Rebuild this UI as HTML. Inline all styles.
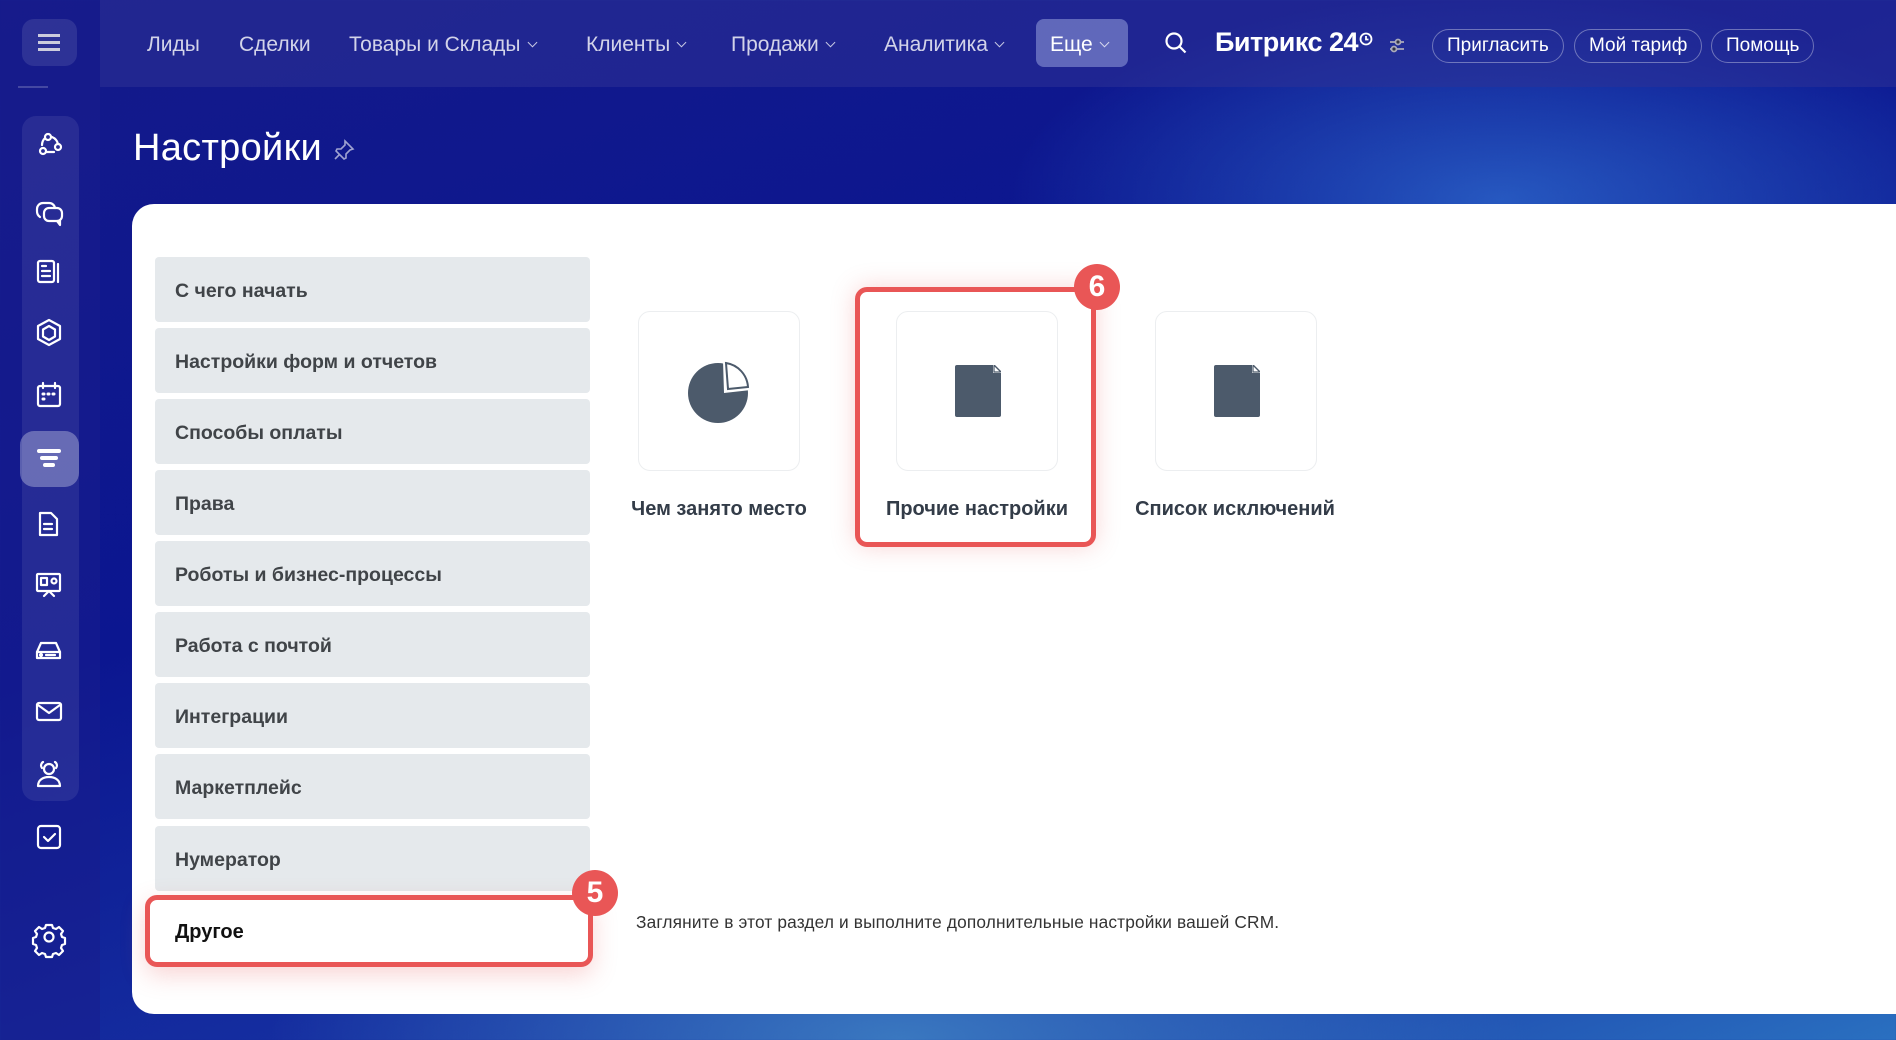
<!DOCTYPE html>
<html><head><meta charset="utf-8">
<style>
*{box-sizing:border-box;margin:0;padding:0}
body{width:1896px;height:1040px;overflow:hidden;position:relative;font-family:"Liberation Sans",sans-serif;
background:radial-gradient(ellipse 700px 300px at 1500px 200px,rgba(60,140,230,.55),transparent 70%),radial-gradient(ellipse 900px 300px at 900px 1040px,#3a78c0,transparent 70%),linear-gradient(160deg,#141a8a 0%,#0b1690 40%,#1a3aa8 80%,#2a70c0 100%);}
.side{position:absolute;left:0;top:0;width:100px;height:1040px;background:rgba(25,30,140,.55)}
.top{position:absolute;left:100px;top:0;right:0;height:87px;background:rgba(45,50,150,.55)}
.nav{position:absolute;top:45px;transform:translateY(-50%);color:rgba(255,255,255,.8);font-size:21px;white-space:nowrap}
.chev{display:inline-block;width:7px;height:7px;border-right:1.5px solid rgba(255,255,255,.75);border-bottom:1.5px solid rgba(255,255,255,.75);transform:rotate(45deg);margin-left:8px;position:relative;top:-5px}
.btn{position:absolute;top:29px;height:34px;border:1.5px solid rgba(255,255,255,.35);border-radius:17px;color:#fff;font-size:19px;line-height:31px;padding:0 14px}
.panel{position:absolute;left:132px;top:204px;width:1800px;height:810px;background:#fff;border-radius:22px}
.mi{position:absolute;left:155px;width:435px;height:65px;background:#e5e9ec;border-radius:4px;font-weight:bold;font-size:19.5px;color:#404448;line-height:69px;padding-left:20px}
.tile{position:absolute;top:311px;width:162px;height:160px;border:1.5px solid #eceef0;border-radius:12px;background:#fff}
.lbl{position:absolute;top:496px;font-weight:bold;font-size:20px;color:#333c48;text-align:center;width:240px}
.badge{position:absolute;width:46px;height:46px;border-radius:50%;background:#e95656;color:#fff;font-weight:bold;font-size:30px;text-align:center;line-height:46px}
</style></head><body>
<div class="side"></div>
<div style="position:absolute;left:22px;top:19px;width:55px;height:47px;border-radius:12px;background:rgba(255,255,255,.1)"></div>
<div style="position:absolute;left:38px;top:34px;width:22px;height:2.5px;background:#ccd;box-shadow:0 7px 0 #ccd,0 14px 0 #ccd"></div>
<div style="position:absolute;left:18px;top:86px;width:30px;height:2px;background:rgba(255,255,255,.2)"></div>
<div style="position:absolute;left:22px;top:116px;width:57px;height:685px;border-radius:14px;background:rgba(255,255,255,.08)"></div>
<div style="position:absolute;left:20px;top:431px;width:59px;height:56px;border-radius:14px;background:rgba(255,255,255,.3)"></div>
<svg style="position:absolute;left:0;top:0" width="100" height="1040" fill="none" stroke="#fff" stroke-width="2.2" stroke-linecap="round" stroke-linejoin="round">
<circle cx="48" cy="137" r="3"/><circle cx="43" cy="151" r="3"/><circle cx="58" cy="147" r="3"/><path d="M42 145a10 10 0 0 1 3-7M46 152h8M52 137a10 10 0 0 1 6 7"/>
<path d="M40 217a7 7 0 0 1-3-6v-2a6 6 0 0 1 6-6h6a6 6 0 0 1 6 5"/><rect x="44" y="208" width="18" height="13" rx="5"/><path d="M57 221l3 4v-4"/>
<rect x="38" y="261" width="16" height="21" rx="2"/><path d="M58 264v18M42 266h4M42 271h8M42 276h8"/>
<path d="M49 320l11 6v13l-11 6-11-6v-13z"/><path d="M49 326l6 3.5v7l-6 3.5-6-3.5v-7z"/>
<rect x="38" y="386" width="22" height="20" rx="2"/><path d="M43 383v5M55 383v5"/><path d="M43 394h1M48 394h1M53 394h1M43 399h1" stroke-width="3"/>
<path d="M39 451h20M42 458h14M45 465h8" stroke-width="4"/>
<path d="M40 513h11l6 6v16h-17z"/><path d="M44 524h8M44 529h8"/>
<rect x="37" y="574" width="23" height="17" rx="1"/><rect x="41" y="578" width="6" height="7"/><circle cx="54" cy="581" r="2.5"/><path d="M44 596l5-5 5 5"/>
<path d="M37 652l4-9h15l4 9v6h-23z"/><path d="M37 652h23M46 655h9"/><circle cx="41" cy="655" r="1"/>
<rect x="37" y="703" width="24" height="17" rx="2"/><path d="M38 705l11 8 11-8"/>
<circle cx="49" cy="769" r="5"/><path d="M38 786c0-6 5-9 11-9s11 3 11 9zM42 768a4 4 0 0 1 1-6M56 768a4 4 0 0 0-1-6"/>
<rect x="38" y="826" width="22" height="22" rx="3"/><path d="M44 837l4 4 7-7"/>
<circle cx="49" cy="937" r="4.5"/><path d="M46 925h6l1 3 3 1 3-2 4 4-2 3 1 3 3 1v6l-3 1-1 3 2 3-4 4-3-2-3 1-1 3h-6l-1-3-3-1-3 2-4-4 2-3-1-3-3-1v-6l3-1 1-3-2-3 4-4 3 2 3-1z"/>
</svg>
<div class="top"></div>
<div class="nav" style="left:147px">Лиды</div>
<div class="nav" style="left:239px">Сделки</div>
<div class="nav" style="left:349px">Товары и Склады<span class="chev"></span></div>
<div class="nav" style="left:586px">Клиенты<span class="chev"></span></div>
<div class="nav" style="left:731px">Продажи<span class="chev"></span></div>
<div class="nav" style="left:884px">Аналитика<span class="chev"></span></div>
<div style="position:absolute;left:1036px;top:19px;width:92px;height:48px;border-radius:8px;background:rgba(150,160,220,.55)"></div>
<div class="nav" style="left:1050px;color:#fff">Еще<span class="chev"></span></div>
<svg style="position:absolute;left:1164px;top:31px" width="26" height="26" fill="none" stroke="#fff" stroke-width="2.2"><circle cx="10" cy="10" r="7.5"/><path d="M15.5 15.5l6 6"/></svg>
<div style="position:absolute;left:1215px;top:27px;color:#fff;font-weight:bold;font-size:27px;letter-spacing:-.5px">Битрикс 24</div>
<svg style="position:absolute;left:1356px;top:32px" width="50" height="26" fill="none" stroke="#fff" stroke-width="1.8"><circle cx="10" cy="7" r="5.5"/><path d="M10 4v3.5h2.5"/><path d="M34 10h14M34 17h14" stroke="#aab"/><circle cx="42" cy="10" r="2.5" fill="#334" stroke="#aab"/><circle cx="38" cy="17" r="2.5" fill="#334" stroke="#aab"/></svg>
<div class="btn" style="left:1432px">Пригласить</div>
<div class="btn" style="left:1574px">Мой тариф</div>
<div class="btn" style="left:1711px">Помощь</div>
<div style="position:absolute;left:133px;top:127px;color:#fff;font-size:38px;font-weight:500;letter-spacing:.3px">Настройки</div>
<svg style="position:absolute;left:332px;top:138px" width="24" height="24" fill="none" stroke="rgba(255,255,255,.6)" stroke-width="1.6"><path d="M13 3l8 8-3 1-4 4 0 4-2 1-8-8 1-2 4 0 4-4z"/><path d="M7 17l-4 4"/></svg>
<div class="panel"></div>
<div class="mi" style="top:257px">С чего начать</div>
<div class="mi" style="top:328px">Настройки форм и отчетов</div>
<div class="mi" style="top:399px">Способы оплаты</div>
<div class="mi" style="top:470px">Права</div>
<div class="mi" style="top:541px">Роботы и бизнес-процессы</div>
<div class="mi" style="top:612px">Работа с почтой</div>
<div class="mi" style="top:683px">Интеграции</div>
<div class="mi" style="top:754px">Маркетплейс</div>
<div class="mi" style="top:826px">Нумератор</div>
<div style="position:absolute;left:145px;top:895px;width:448px;height:72px;border:5px solid #e95656;border-radius:12px;background:#fff;box-shadow:0 8px 24px rgba(233,86,86,.25);font-weight:bold;font-size:20px;color:#111;line-height:64px;padding-left:25px">Другое</div>
<div class="badge" style="left:572px;top:870px">5</div>
<div style="position:absolute;left:636px;top:912px;font-size:17.3px;color:#333;letter-spacing:.15px">Загляните в этот раздел и выполните дополнительные настройки вашей CRM.</div>
<div style="position:absolute;left:855px;top:287px;width:241px;height:260px;border:5px solid #e95656;border-radius:12px;box-shadow:0 0 24px rgba(233,86,86,.25)"></div>
<div class="tile" style="left:638px"><svg style="position:absolute;left:49px;top:47px" width="64" height="64"><circle cx="30" cy="34" r="30" fill="#4c5a6b"/><path d="M35 2a29 29 0 0 1 28 29l-27 3z" fill="#fff"/><path d="M38 4a26 26 0 0 1 22 24l-20 2z" fill="none" stroke="#4c5a6b" stroke-width="2"/></svg></div>
<div class="tile" style="left:896px"><svg style="position:absolute;left:58px;top:53px" width="46" height="52"><path d="M2 0h38l6 6v44a2 2 0 0 1-2 2h-42a2 2 0 0 1-2-2v-48a2 2 0 0 1 2-2z" fill="#4c5a6b"/><path d="M38 0l8 8h-8z" fill="#fff"/><path d="M39 1v6h6" fill="none" stroke="#4c5a6b" stroke-width="1.2"/></svg></div>
<div class="tile" style="left:1155px"><svg style="position:absolute;left:58px;top:53px" width="46" height="52"><path d="M2 0h38l6 6v44a2 2 0 0 1-2 2h-42a2 2 0 0 1-2-2v-48a2 2 0 0 1 2-2z" fill="#4c5a6b"/><path d="M38 0l8 8h-8z" fill="#fff"/><path d="M39 1v6h6" fill="none" stroke="#4c5a6b" stroke-width="1.2"/></svg></div>
<div class="lbl" style="left:599px;top:498px">Чем занято место</div>
<div class="lbl" style="left:857px;top:498px">Прочие настройки</div>
<div class="lbl" style="left:1115px;top:498px">Список исключений</div>
<div class="badge" style="left:1074px;top:264px">6</div>
</body></html>
